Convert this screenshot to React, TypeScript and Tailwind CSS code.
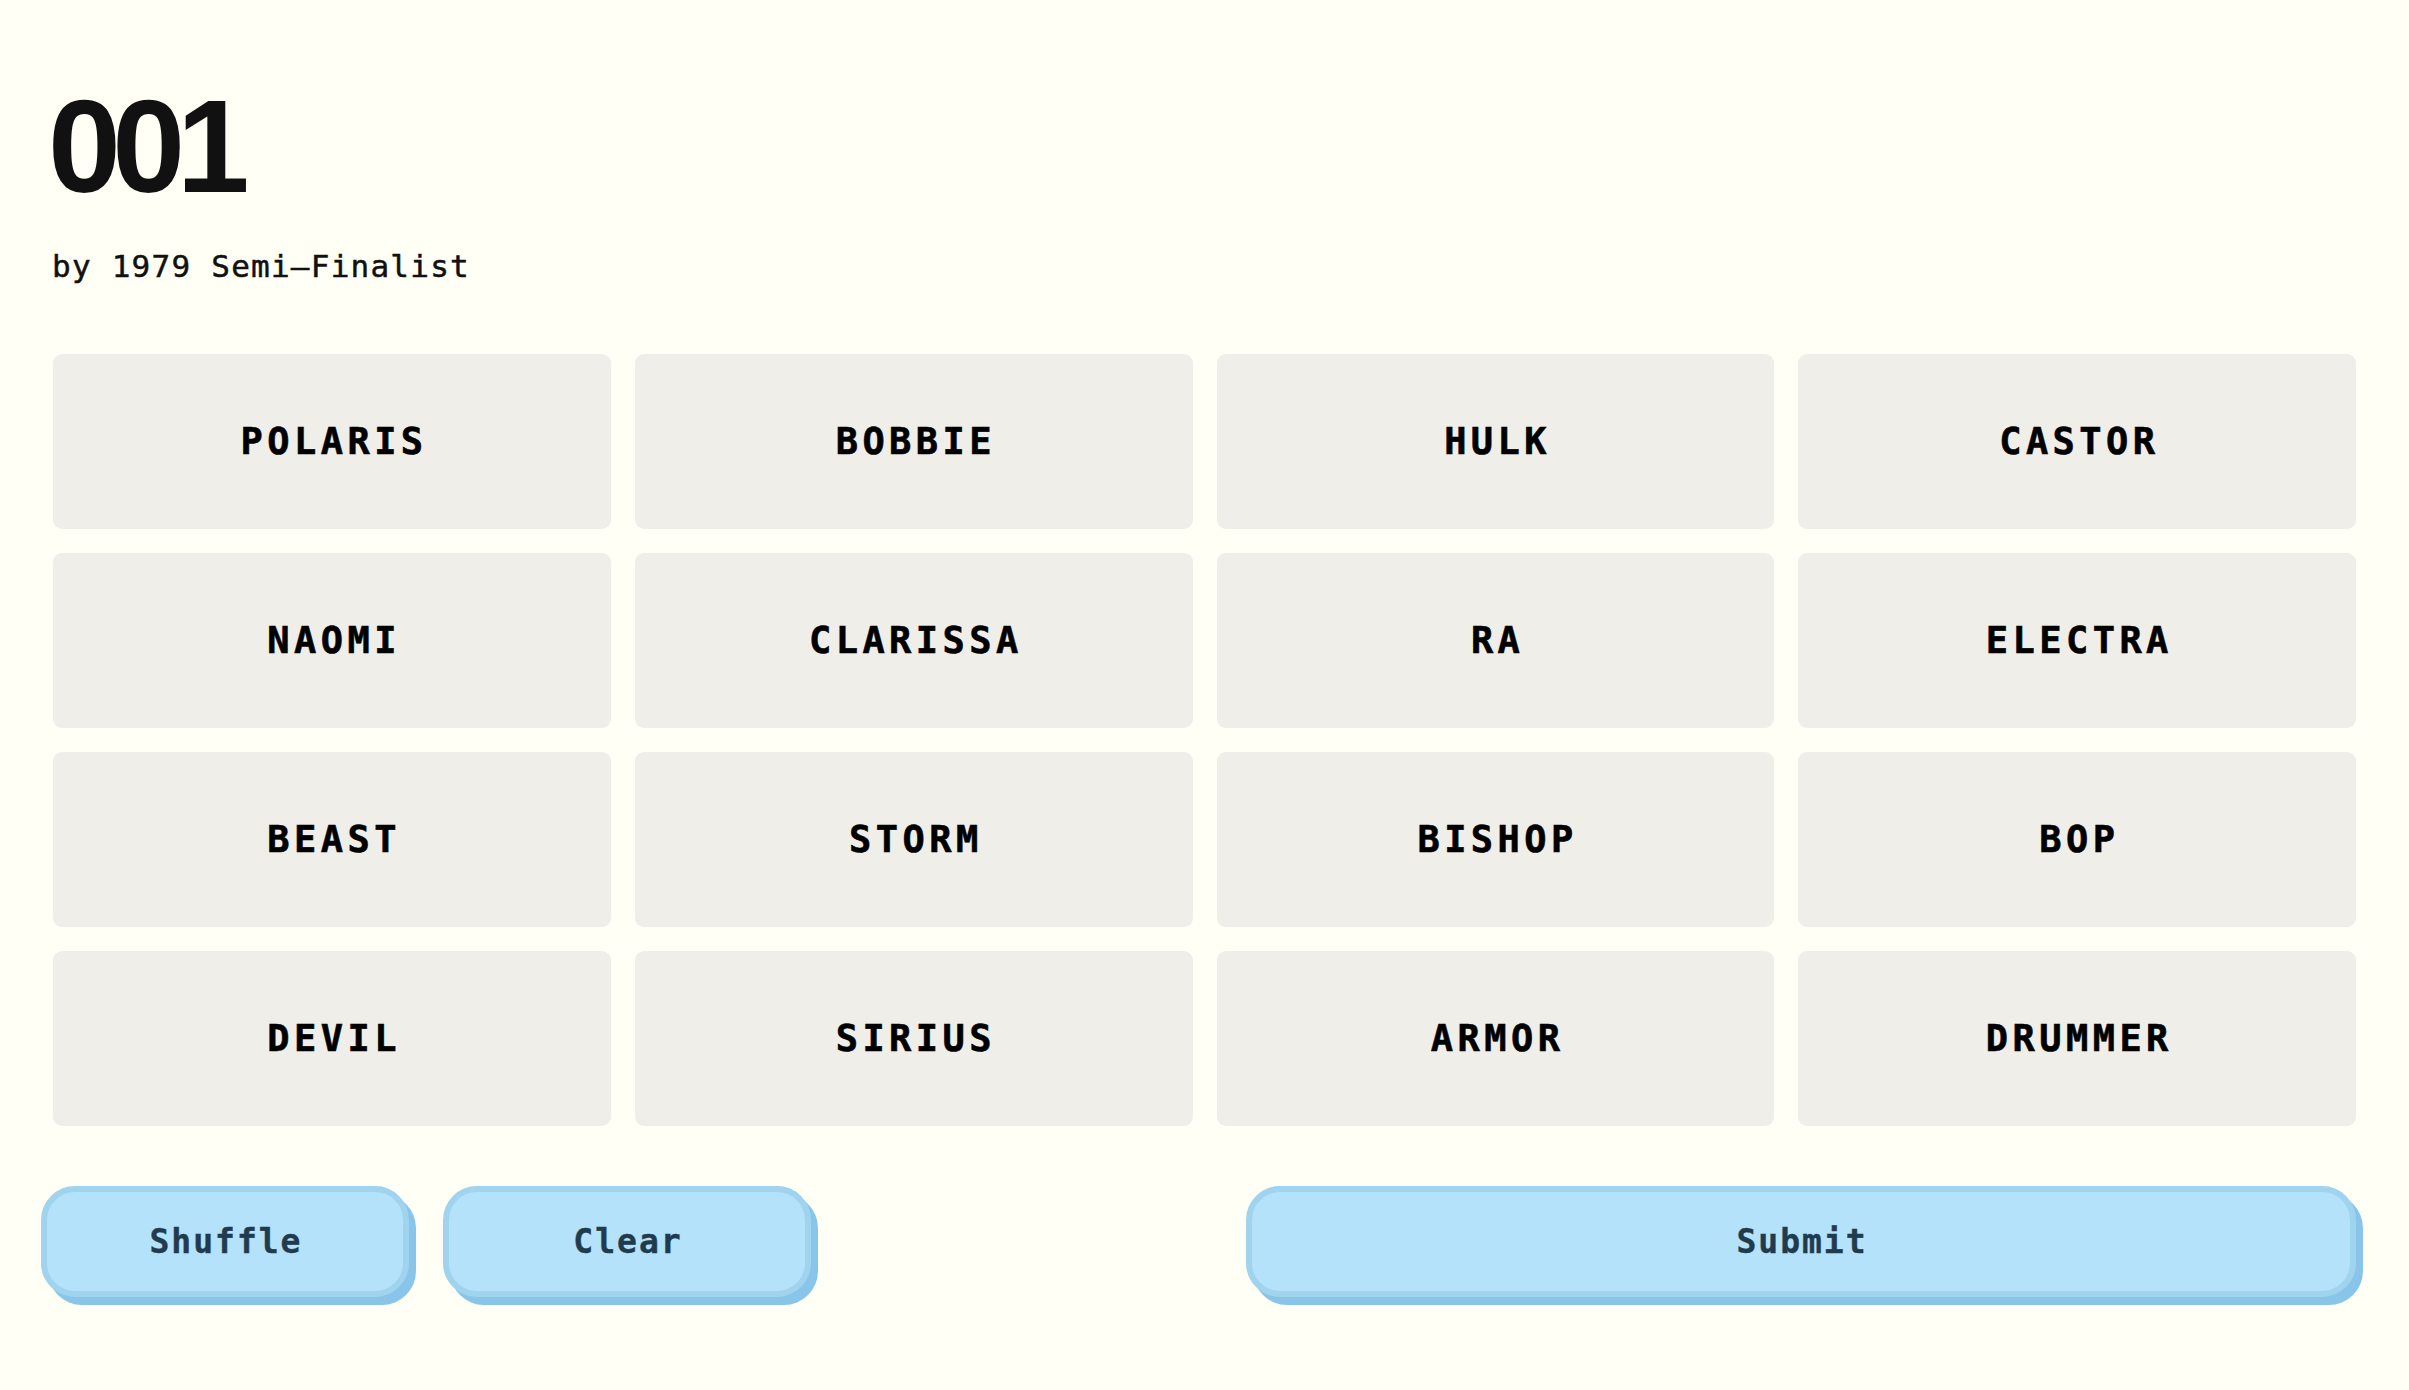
import React from "react";

const words = [
  "POLARIS", "BOBBIE", "HULK", "CASTOR",
  "NAOMI", "CLARISSA", "RA", "ELECTRA",
  "BEAST", "STORM", "BISHOP", "BOP",
  "DEVIL", "SIRIUS", "ARMOR", "DRUMMER",
];

const mono = "font-['DejaVu_Sans_Mono','Liberation_Mono',monospace]";

function Btn({ label, className }: { label: string; className: string }) {
  return (
    <button
      className={`h-[111px] rounded-[34px] bg-[#b3e2fa] border-[6px] border-[#a0d3ee] shadow-[7px_8px_0_#88c5e8] flex items-center justify-center ${mono} font-bold text-[33px] tracking-[0.06em] text-[#1f3b4d] [-webkit-text-stroke:0.4px_#1f3b4d] ${className}`}
    >
      <span className="pl-[0.06em]">{label}</span>
    </button>
  );
}

export default function App() {
  return (
    <div className="min-h-screen w-full bg-[#fffff6] px-[53px] pt-[81px] pb-[60px]">
      <h1 className="font-['Liberation_Sans',Arial,sans-serif] font-bold text-[131px] leading-none tracking-[-0.065em] text-[#111111] -ml-[5px]">
        001
      </h1>
      <p className={`${mono} mt-[39px] text-[31px] leading-none text-[#111111] tracking-[0.04em] [-webkit-text-stroke:0.5px_#111111] -ml-[1px]`}>
        by 1979 Semi–Finalist
      </p>
      <div className="mt-[72px] grid grid-cols-4 gap-x-[24px] gap-y-[24px]">
        {words.map((w) => (
          <div
            key={w}
            className={`h-[175px] rounded-[9px] bg-[#efeee9] flex items-center justify-center ${mono} font-bold text-[37px] tracking-[0.12em] text-black [-webkit-text-stroke:0.6px_#000000]`}
          >
            <span className="pl-[0.12em]">{w}</span>
          </div>
        ))}
      </div>
      <div className="mt-[60px] -ml-[12px] flex items-center">
        <Btn label="Shuffle" className="w-[368px]" />
        <Btn label="Clear" className="w-[368px] ml-[34px]" />
        <div className="flex-1" />
        <Btn label="Submit" className="w-[1110px]" />
      </div>
    </div>
  );
}
